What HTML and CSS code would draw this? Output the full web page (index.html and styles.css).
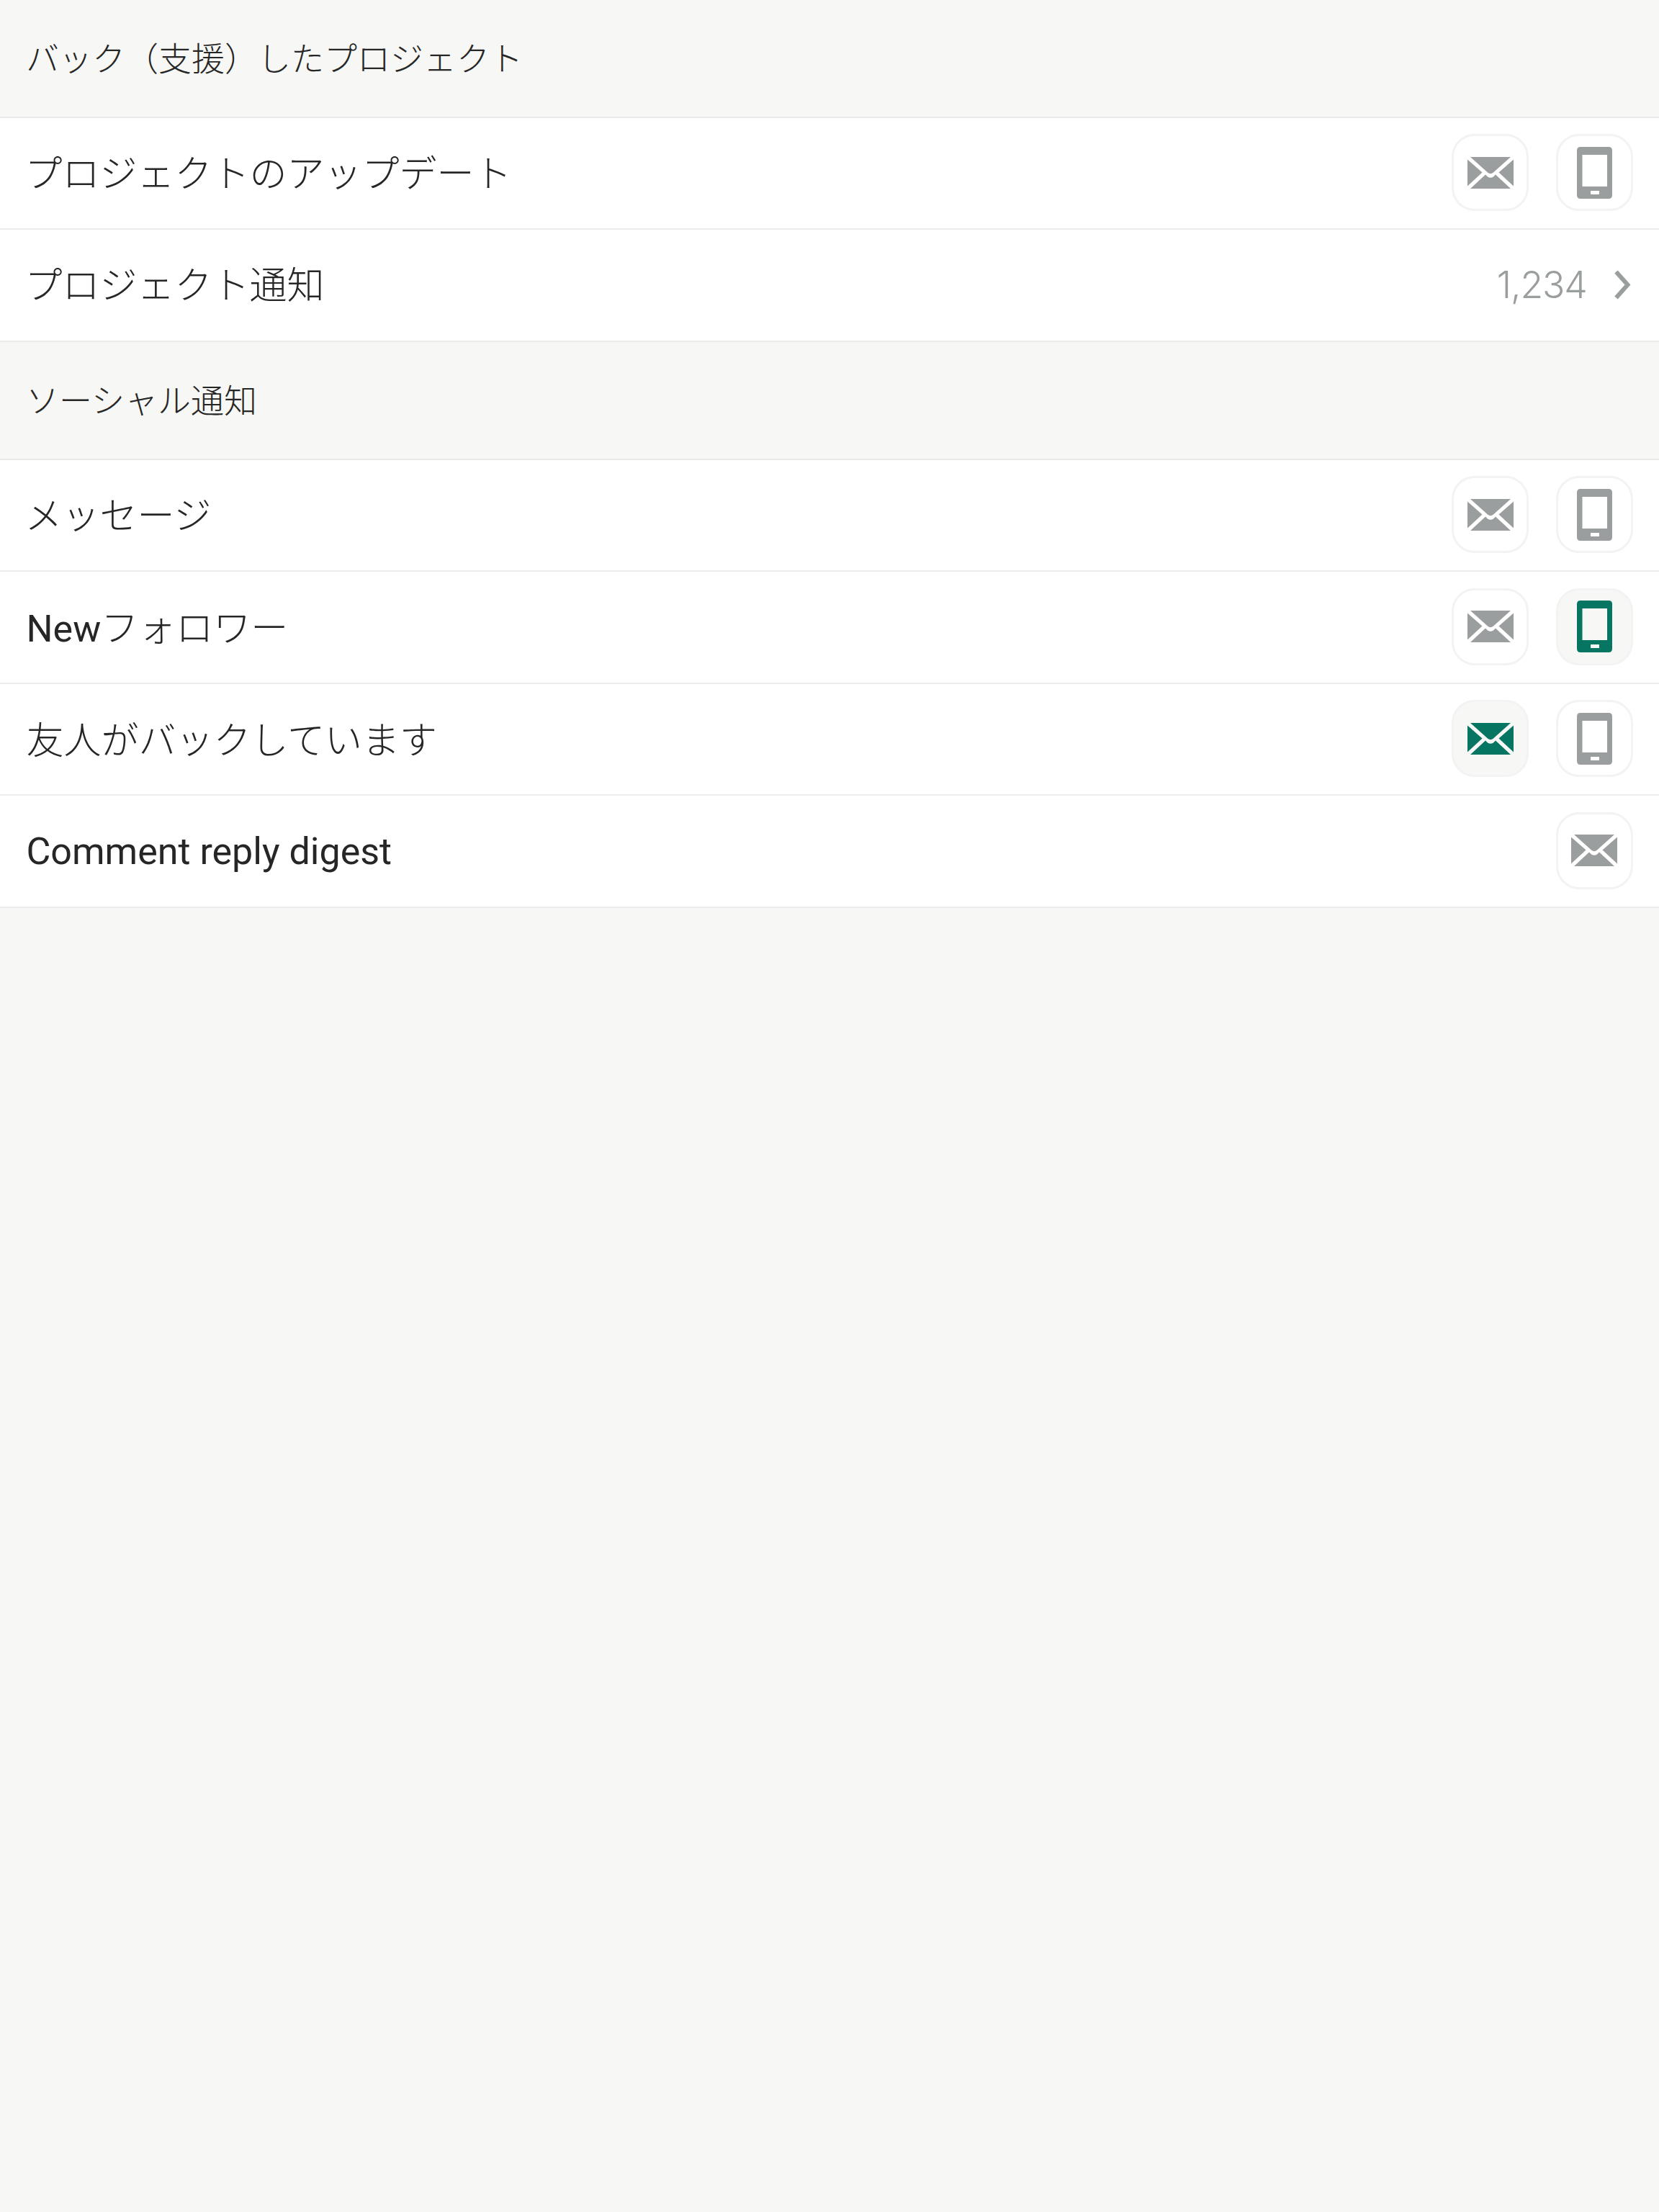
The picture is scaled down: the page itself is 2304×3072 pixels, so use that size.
FILE: index.html
```html
<!DOCTYPE html>
<html lang="ja">
<head>
    <meta charset="UTF-8">
    <meta name="viewport" content="width=device-width, initial-scale=1.0">
    <title>通知設定</title>
    <link rel="stylesheet" href="styles.css">
</head>
<body>
    <svg class="sprites" width="0" height="0">
        <symbol id="mail" viewBox="0 0 64 44">
            <path d="M4 0H60L36 21.500Q32 25 28 21.500Z"/>
            <path d="M0 3.500L20.500 21.500L0 40.500Z"/>
            <path d="M64 3.500L43.500 21.500L64 40.500Z"/>
            <path d="M4 44L25 24.500L28 27.500Q32 30 36 27.500L39 24.500L60 44Z"/>
        </symbol>
        <symbol id="phone" viewBox="0 0 49 72">
            <path fill-rule="evenodd" d="M5 0H44Q49 0 49 5V67Q49 72 44 72H5Q0 72 0 67V5Q0 0 5 0ZM7.500 11V55H42V11ZM19.500 61Q19 61 19 62V65Q19 66 19.500 66H30.500Q31 66 31 65V62Q31 61 30.500 61Z"/>
        </symbol>
    </svg>

    <section class="group">
        <h2 class="group-title">バック（支援）したプロジェクト</h2>
        <div class="row">
            <span class="row-label tight">プロジェクトのアップデート</span>
            <div class="toggles">
                <button class="toggle"><svg class="icon-mail"><use href="#mail"/></svg></button>
                <button class="toggle"><svg class="icon-phone"><use href="#phone"/></svg></button>
            </div>
        </div>
        <div class="row">
            <span class="row-label tight">プロジェクト通知</span>
            <div class="count">
                <span>1,234</span>
                <svg class="chevron" viewBox="0 0 23 41"><path d="M2.500 2.500L18.500 20.500L2.500 38.500"/></svg>
            </div>
        </div>
    </section>

    <section class="group">
        <h2 class="group-title">ソーシャル通知</h2>
        <div class="row">
            <span class="row-label tight">メッセージ</span>
            <div class="toggles">
                <button class="toggle"><svg class="icon-mail"><use href="#mail"/></svg></button>
                <button class="toggle"><svg class="icon-phone"><use href="#phone"/></svg></button>
            </div>
        </div>
        <div class="row">
            <span class="row-label"><span class="latin">New</span>フォロワー</span>
            <div class="toggles">
                <button class="toggle"><svg class="icon-mail"><use href="#mail"/></svg></button>
                <button class="toggle on"><svg class="icon-phone"><use href="#phone"/></svg></button>
            </div>
        </div>
        <div class="row">
            <span class="row-label">友人がバックしています</span>
            <div class="toggles">
                <button class="toggle on"><svg class="icon-mail"><use href="#mail"/></svg></button>
                <button class="toggle"><svg class="icon-phone"><use href="#phone"/></svg></button>
            </div>
        </div>
        <div class="row">
            <span class="row-label latin">Comment reply digest</span>
            <div class="toggles">
                <button class="toggle"><svg class="icon-mail"><use href="#mail"/></svg></button>
            </div>
        </div>
    </section>
</body>
</html>
```

FILE: styles.css
```css
* {
    box-sizing: border-box;
    margin: 0;
    padding: 0;
}

body {
    font-family: "Liberation Sans", "Noto Sans CJK JP", sans-serif;
    background-color: #f7f7f5;
    color: #262626;
    min-height: 3072px;
}

.sprites {
    display: block;
}

.group-title {
    height: 163.75px;
    padding: 0 0 6px 36px;
    display: flex;
    align-items: center;
    font-size: 46px;
    font-weight: 300;
    border-bottom: 2px solid #e9e9e9;
}

.row {
    height: 155.5px;
    padding: 0 36.5px 1.5px;
    display: flex;
    justify-content: space-between;
    align-items: center;
    background: #fff;
    border-bottom: 2px solid #ececec;
}

.row-label {
    padding-bottom: 3px;
    font-size: 52px;
    font-weight: 300;
}

.row-label.tight {
    margin-left: -2px;
    padding-bottom: 5px;
}

.latin {
    font-family: Roboto, sans-serif;
    font-weight: 400;
}

.row-label.latin {
    padding: 2px 0 0;
}

.toggles {
    display: flex;
    gap: 37.5px;
}

.toggle {
    width: 107px;
    height: 107px;
    display: flex;
    justify-content: center;
    align-items: center;
    background: #fff;
    border: 3px solid #f3f3f3;
    border-radius: 32px;
    color: #9b9e9e;
}

.toggle.on {
    background: #f7f7f5;
    color: #067561;
}

.toggle svg {
    fill: currentColor;
}

.icon-mail {
    width: 64px;
    height: 44px;
}

.icon-phone {
    width: 49px;
    height: 72px;
}

.count {
    display: flex;
    align-items: center;
    gap: 38px;
    margin-right: 3px;
    font-family: Inter, sans-serif;
    font-size: 51.75px;
    font-weight: 300;
    letter-spacing: -1.2px;
    color: #9b9e9e;
}

.chevron {
    width: 23px;
    height: 41px;
    fill: none;
    stroke: #9b9e9e;
    stroke-width: 6;
}
```
